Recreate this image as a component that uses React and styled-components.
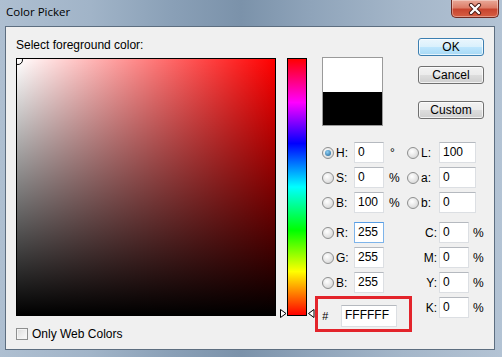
import React from "react";
import styled, { createGlobalStyle } from "styled-components";

const GlobalStyle = createGlobalStyle`
  body {
    margin: 0;
    overflow: hidden;
    font-family: "Liberation Sans", Arial, sans-serif;
  }
`;

const Window = styled.div`
  width: 502px;
  height: 357px;
  display: flex;
  flex-direction: column;
  background: linear-gradient(
    to right,
    #aebfd1 0%,
    #a1b4c8 18%,
    #8aa0b7 34%,
    #7b92aa 48%,
    #8fa4ba 62%,
    #a4b6c9 80%,
    #b3c3d4 100%
  );
  font-size: 12px;
  color: #000;
`;

const TitleBar = styled.div`
  height: 26px;
  display: flex;
  justify-content: space-between;
  align-items: flex-start;
  padding-left: 6px;
`;

const Title = styled.div`
  font-family: "Open Sans", "Noto Sans", sans-serif;
  font-size: 11.5px;
  line-height: 24px;
`;

const CloseButton = styled.div`
  width: 48px;
  height: 18px;
  margin-right: 3px;
  box-sizing: border-box;
  border: 1px solid #6f2a22;
  border-top: none;
  border-radius: 0 0 5px 5px;
  background: linear-gradient(#e9a999 0%, #dd7d68 45%, #c8452f 55%, #d65e43 100%);
  box-shadow: inset 0 0 0 1px rgba(255, 255, 255, 0.35);
  display: flex;
  align-items: center;
  justify-content: center;
`;

const Client = styled.div`
  flex: 1;
  margin: 0 7px 7px 5px;
  background: #f0f0f0;
  border: 1px solid #5d6e80;
  display: flex;
  align-items: flex-start;
  padding: 11px 0 0 10px;
`;

const LeftCol = styled.div`
  display: flex;
  flex-direction: column;
`;

const Caption = styled.div`
  line-height: 14px;
  height: 14px;
`;

const Field = styled.div`
  position: relative;
  overflow: hidden;
  margin-top: 6px;
  width: 260px;
  height: 258px;
  box-sizing: border-box;
  border: 1px solid #000;
  background: linear-gradient(to top, #000, rgba(0, 0, 0, 0)),
    linear-gradient(to right, #fff, #f00);
`;

const Marker = styled.div`
  position: absolute;
  left: -4px;
  top: -4px;
  width: 10px;
  height: 10px;
  box-sizing: border-box;
  border-radius: 50%;
  border: 1px solid #000;
  box-shadow: inset 0 0 0 1px #fff;
`;

const CheckRow = styled.label`
  display: flex;
  align-items: center;
  margin-top: 11px;
  line-height: 14px;
`;

const CheckBox = styled.span`
  width: 12px;
  height: 12px;
  box-sizing: border-box;
  border: 1px solid #8e8f8f;
  background: linear-gradient(135deg, #dcdcdc, #fbfbfb);
  box-shadow: inset 0 0 0 1px #f4f4f4;
  margin-right: 4px;
`;

const HueWrap = styled.div`
  position: relative;
  margin: 20px 0 0 4px;
  width: 34px;
  height: 258px;
`;

const HueBar = styled.div`
  margin-left: 7px;
  width: 20px;
  height: 258px;
  box-sizing: border-box;
  border: 1px solid #000;
  background: linear-gradient(#f00, #f0f 17%, #00f 33%, #0ff 50%, #0f0 67%, #ff0 83%, #f00);
`;

const Arrow = styled.svg`
  position: absolute;
  top: 251px;
  left: ${(p) => (p.$side === "left" ? "0" : "28px")};
`;

const RightPanel = styled.div`
  margin-left: 8px;
  width: 162px;
  display: flex;
  flex-direction: column;
`;

const TopRow = styled.div`
  display: flex;
  justify-content: space-between;
  align-items: flex-start;
`;

const Swatch = styled.div`
  margin-top: 19px;
  width: 61px;
  height: 69px;
  box-sizing: border-box;
  border: 1px solid #9a9a9a;
  display: flex;
  flex-direction: column;
`;

const SwatchHalf = styled.div`
  flex: 1;
  background: ${(p) => p.$color};
`;

const Buttons = styled.div`
  display: flex;
  flex-direction: column;
`;

const Button = styled.button`
  width: 66px;
  height: 18px;
  margin-top: ${(p) => p.$gap || 0}px;
  padding: 0;
  box-sizing: border-box;
  border-radius: 3px;
  font-family: "Liberation Sans", Arial, sans-serif;
  font-size: 12px;
  color: #000;
  border: 1px solid ${(p) => (p.$default ? "#3c7fb1" : "#707070")};
  background: ${(p) =>
    p.$default
      ? "linear-gradient(#eaf6fd 0%, #d9f0fc 50%, #bee6fd 51%, #a7d9f5 100%)"
      : "linear-gradient(#f2f2f2 0%, #ebebeb 50%, #dddddd 51%, #cfcfcf 100%)"};
  box-shadow: inset 0 0 0 1px rgba(255, 255, 255, 0.7);
`;

const Block = styled.div`
  display: flex;
  flex-direction: column;
  gap: 4px;
  margin-top: ${(p) => p.$top}px;
`;

const Row = styled.div`
  display: flex;
  align-items: ${(p) => (p.$top ? "flex-start" : "center")};
  height: ${(p) => (p.$top ? "auto" : "21px")};
`;

const Half = styled.div`
  display: flex;
  align-items: center;
  width: 85px;
`;

const Side = styled.div`
  display: flex;
  align-items: center;
  height: 21px;
`;

const RadioCell = styled.span`
  width: 12px;
  display: flex;
  align-items: center;
`;

const Radio = styled.span`
  width: 12px;
  height: 12px;
  box-sizing: border-box;
  border-radius: 50%;
  border: 1px solid #8e8f8f;
  background: radial-gradient(circle at 40% 35%, #ffffff, #cfcfcf);
  display: flex;
  align-items: center;
  justify-content: center;
  &::after {
    content: "";
    display: ${(p) => (p.$checked ? "block" : "none")};
    width: 6px;
    height: 6px;
    border-radius: 50%;
    background: radial-gradient(circle at 40% 35%, #8fd0f5, #1c5f92);
  }
`;

const Label = styled.span`
  width: 20px;
  box-sizing: border-box;
  padding: ${(p) => (p.$right ? "0 2px 0 0" : "0 0 0 2px")};
  text-align: ${(p) => (p.$right ? "right" : "left")};
`;

const Input = styled.div`
  width: ${(p) => p.$w || 30}px;
  height: ${(p) => p.$h || 21}px;
  box-sizing: border-box;
  padding: 0 0 0 3px;
  background: #fff;
  border: 1px solid ${(p) => (p.$focus ? "#7eb4ea" : "#dcdfe3")};
  border-top-color: ${(p) => (p.$focus ? "#569de5" : "#b5b9bf")};
  line-height: ${(p) => (p.$h || 21) - 3}px;
`;

const Unit = styled.span`
  padding-left: ${(p) => p.$pad || 5}px;
`;

const HexBox = styled.div`
  margin: -1px -5px 0 -7px;
  width: 97px;
  height: 36px;
  box-sizing: border-box;
  border: 3px solid #e3242b;
  display: flex;
  align-items: flex-start;
  padding: 6px 0 0 4px;
`;

const Hash = styled.span`
  width: 19px;
  line-height: 22px;
  font-style: italic;
  font-size: 11px;
`;

const hsb = [
  ["H", "0", "°", true, "L", "100"],
  ["S", "0", "%", false, "a", "0"],
  ["B", "100", "%", false, "b", "0"],
];

const rgb = [
  ["R", "255", true, "C"],
  ["G", "255", false, "M"],
  ["B", "255", false, "Y"],
];

function CloseGlyph() {
  return (
    <svg width="14" height="12" viewBox="0 0 14 12">
      <path d="M3 2 L11 10 M11 2 L3 10" stroke="#4a1a14" strokeWidth="4.2" strokeLinecap="round" />
      <path d="M3 2 L11 10 M11 2 L3 10" stroke="#fff" strokeWidth="2.4" strokeLinecap="round" />
    </svg>
  );
}

function ArrowIcon({ side }) {
  const d = side === "left" ? "M0.5 0.5 L6 4.5 L0.5 8.5 Z" : "M6 0.5 L0.5 4.5 L6 8.5 Z";
  return (
    <Arrow $side={side} width="7" height="9" viewBox="0 0 7 9">
      <path d={d} fill="#fff" stroke="#000" strokeWidth="1" />
    </Arrow>
  );
}

function Percent({ label, value }) {
  return (
    <Side>
      <RadioCell />
      <Label $right>{label}:</Label>
      <Input>{value}</Input>
      <Unit $pad={4}>%</Unit>
    </Side>
  );
}

export default function App() {
  return (
    <>
      <GlobalStyle />
      <Window>
        <TitleBar>
          <Title>Color Picker</Title>
          <CloseButton>
            <CloseGlyph />
          </CloseButton>
        </TitleBar>
        <Client>
          <LeftCol>
            <Caption>Select foreground color:</Caption>
            <Field>
              <Marker />
            </Field>
            <CheckRow>
              <CheckBox />
              Only Web Colors
            </CheckRow>
          </LeftCol>
          <HueWrap>
            <HueBar />
            <ArrowIcon side="left" />
            <ArrowIcon side="right" />
          </HueWrap>
          <RightPanel>
            <TopRow>
              <Swatch>
                <SwatchHalf $color="#fff" />
                <SwatchHalf $color="#000" />
              </Swatch>
              <Buttons>
                <Button $default>OK</Button>
                <Button $gap={10}>Cancel</Button>
                <Button $gap={17}>Custom</Button>
              </Buttons>
            </TopRow>
            <Block $top={16}>
              {hsb.map(([l, v, u, on, l2, v2]) => (
                <Row key={l}>
                  <Half>
                    <RadioCell>
                      <Radio $checked={on} />
                    </RadioCell>
                    <Label>{l}:</Label>
                    <Input>{v}</Input>
                    <Unit $pad={u === "°" ? 6 : 5}>{u}</Unit>
                  </Half>
                  <RadioCell>
                    <Radio />
                  </RadioCell>
                  <Label>{l2}:</Label>
                  <Input $w={37}>{v2}</Input>
                </Row>
              ))}
            </Block>
            <Block $top={9}>
              {rgb.map(([l, v, f, c]) => (
                <Row key={c}>
                  <Half>
                    <RadioCell>
                      <Radio />
                    </RadioCell>
                    <Label>{l}:</Label>
                    <Input $focus={f}>{v}</Input>
                  </Half>
                  <Percent label={c} value="0" />
                </Row>
              ))}
              <Row $top>
                <HexBox>
                  <Hash>#</Hash>
                  <Input $w={56} $h={22}>
                    FFFFFF
                  </Input>
                </HexBox>
                <Percent label="K" value="0" />
              </Row>
            </Block>
          </RightPanel>
        </Client>
      </Window>
    </>
  );
}
